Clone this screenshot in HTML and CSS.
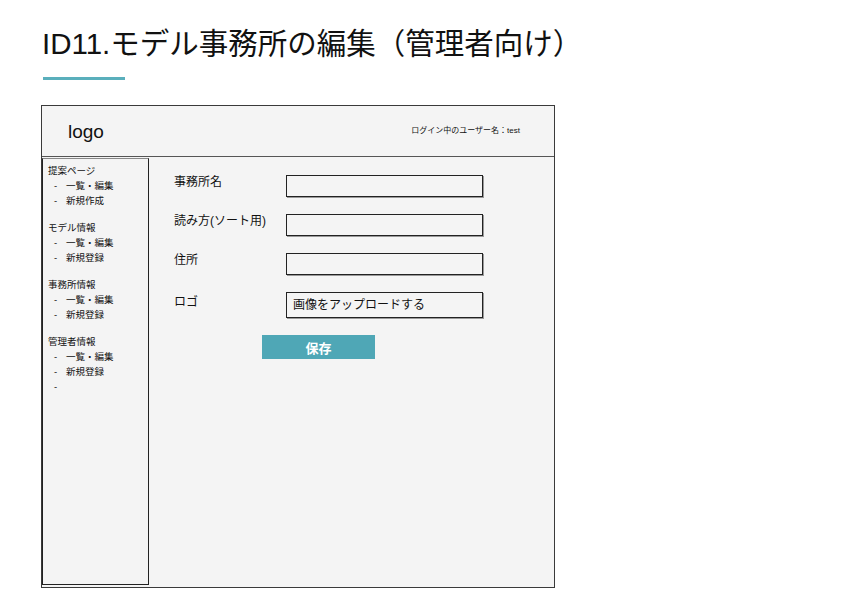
FILE: index.html
```html
<!DOCTYPE html>
<html lang="ja">
  <head>
    <meta charset="utf-8" />
    <title>ID11 モデル事務所の編集</title>
    <link rel="stylesheet" href="styles.css">
  </head>
  <body>
    <h1 class="title">ID11.モデル事務所の編集（管理者向け）</h1>
    <div class="title-line"></div>

    <!-- ワイヤーフレーム -->
    <section class="frame">
      <header class="frame-head">
        <p class="logo">logo</p>
        <p class="user">ログイン中のユーザー名：test</p>
      </header>

      <div class="frame-body">
        <nav class="side">
          <ul class="group">
            <li class="group-title">提案ページ</li>
            <li><span class="dash">-</span>一覧・編集</li>
            <li><span class="dash">-</span>新規作成</li>
          </ul>
          <ul class="group">
            <li class="group-title">モデル情報</li>
            <li><span class="dash">-</span>一覧・編集</li>
            <li><span class="dash">-</span>新規登録</li>
          </ul>
          <ul class="group">
            <li class="group-title">事務所情報</li>
            <li><span class="dash">-</span>一覧・編集</li>
            <li><span class="dash">-</span>新規登録</li>
          </ul>
          <ul class="group">
            <li class="group-title">管理者情報</li>
            <li><span class="dash">-</span>一覧・編集</li>
            <li><span class="dash">-</span>新規登録</li>
            <li><span class="dash">-</span></li>
          </ul>
        </nav>

        <main class="form">
          <div class="row">
            <label class="label">事務所名</label>
            <div class="field"></div>
          </div>
          <div class="row">
            <label class="label">読み方(ソート用)</label>
            <div class="field"></div>
          </div>
          <div class="row">
            <label class="label">住所</label>
            <div class="field"></div>
          </div>
          <div class="row">
            <label class="label label-logo">ロゴ</label>
            <div class="field upload">画像をアップロードする</div>
          </div>
          <button class="save">保存</button>
        </main>
      </div>
    </section>
  </body>
</html>
```

FILE: styles.css
```css
body {
  margin: 0;
  padding: 0 0 0 41px;
  font-family: "Liberation Sans", "Noto Sans CJK JP", sans-serif;
  color: #111;
  background: white;
}

p,
ul {
  margin: 0;
  padding: 0;
}

li {
  list-style: none;
}

/*_____TITLE_____*/

.title {
  margin: 26px 0 0 1px;
  font-size: 29.5px;
  font-weight: normal;
  line-height: 36px;
  white-space: nowrap;
}

.title-line {
  width: 82px;
  height: 3px;
  margin: 15px 0 0 2px;
  background-color: #5aafbc;
}

/*_____FRAME_____*/

.frame {
  width: 512px;
  height: 481px;
  margin-top: 25px;
  border: 1px solid #3a3a3a;
  background-color: #f4f4f4;
  box-shadow: 0 1px 0 #999;
  display: flex;
  flex-direction: column;
}

.frame-head {
  height: 50px;
  border-bottom: 1px solid #555;
  display: flex;
  align-items: center;
  justify-content: space-between;
  padding: 0 34px 0 26px;
}

.logo {
  font-size: 19px;
  margin-top: 2px;
}

.user {
  font-size: 8px;
  margin-top: -3px;
}

.frame-body {
  flex: 1;
  display: flex;
  padding: 1px 0 2px;
}

/*_____SIDEBAR_____*/

.side {
  width: 100px;
  border: 1px solid #222;
  border-top-color: #888;
  padding: 4px 0 0 5px;
  font-size: 9.5px;
  line-height: 15px;
}

.group {
  margin-bottom: 12px;
}

.dash {
  display: inline-block;
  width: 12px;
  padding-left: 6px;
}

/*_____FORM_____*/

.form {
  flex: 1;
  padding: 17px 0 0 25px;
  display: flex;
  flex-direction: column;
  align-items: flex-start;
}

.row {
  display: flex;
  align-items: flex-start;
  margin-bottom: 17px;
  font-size: 12px;
}

.label {
  width: 112px;
  line-height: 14px;
}

.label-logo {
  margin-top: 3px;
}

.field {
  width: 195px;
  height: 20px;
  border: 1px solid #222;
  box-shadow: 1px 1px 0 #999;
  background-color: #f4f4f4;
}

.upload {
  height: 24px;
  line-height: 24px;
  padding-left: 6px;
  width: 189px;
}

.save {
  width: 113px;
  height: 24px;
  margin: 0 0 0 88px;
  border: none;
  background-color: #4fa7b6;
  color: white;
  font-family: "Noto Sans CJK JP", sans-serif;
  font-size: 13px;
  font-weight: bold;
  padding: 0;
}
```
